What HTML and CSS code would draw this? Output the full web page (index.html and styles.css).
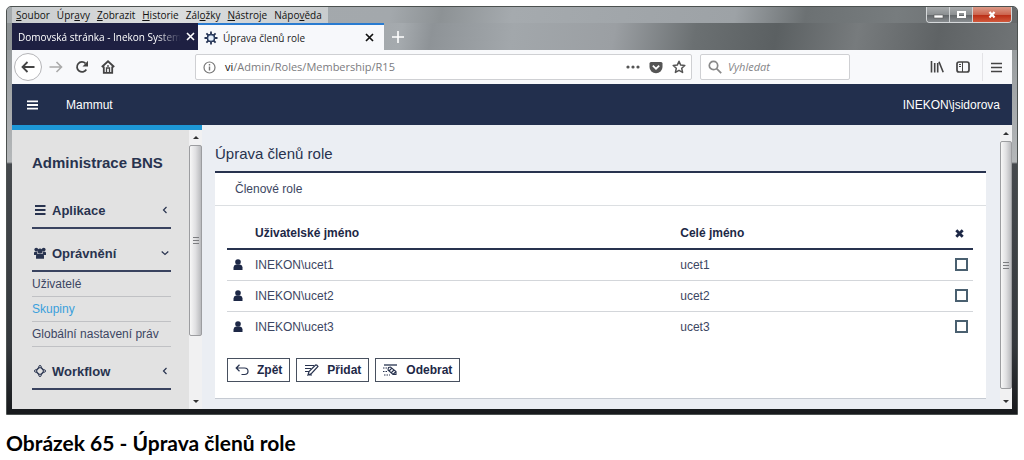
FILE: index.html
```html
<!DOCTYPE html>
<html lang="cs">
<head>
<meta charset="utf-8">
<title>Úprava členů role</title>
<link rel="stylesheet" href="styles.css">
</head>
<body>
<figure class="figure">
<div class="window">
  <div class="titlebar">
    <nav class="menubar">
      <span><u>S</u>oubor</span><span>Úpr<u>a</u>vy</span><span><u>Z</u>obrazit</span><span><u>H</u>istorie</span><span>Zál<u>o</u>žky</span><span><u>N</u>ástroje</span><span>Nápo<u>v</u>ěda</span>
    </nav>
    <div class="winctl">
      <button aria-label="Minimalizovat"><svg width="22" height="14" viewBox="0 0 22 14"><rect x="7" y="7" width="9" height="3" fill="#fff" stroke="#555" stroke-width=".6"/></svg></button>
      <button aria-label="Maximalizovat"><svg width="22" height="14" viewBox="0 0 22 14"><rect x="8" y="4" width="7" height="5" fill="none" stroke="#fff" stroke-width="2"/></svg></button>
      <button class="close" aria-label="Zavřít"><svg width="38" height="14" viewBox="0 0 38 14"><path d="M16.500 4l5 5.500M21.500 4l-5 5.500" stroke="#fff" stroke-width="2.200"/></svg></button>
    </div>
  </div>
  <div class="tabs">
    <div class="tab tab-dark">
      <span class="tab-label">Domovská stránka - Inekon System</span>
      <button aria-label="Zavřít panel"><svg width="9" height="9" viewBox="0 0 9 9"><path d="M1 1l7 7M8 1l-7 7" stroke="#fff" stroke-width="1.600"/></svg></button>
    </div>
    <div class="tab tab-active">
      <svg width="14" height="14" viewBox="0 0 14 14"><g stroke="#263454" stroke-width="1.800"><path d="M7 .5v13M.5 7h13M2.400 2.400l9.200 9.200M11.600 2.400l-9.200 9.200"/></g><circle cx="7" cy="7" r="4" fill="#4d6387" stroke="#263454"/><circle cx="7" cy="7" r="2.600" fill="#e6effa"/></svg>
      <span class="tab-label">Úprava členů role</span>
      <button aria-label="Zavřít panel"><svg width="9" height="9" viewBox="0 0 9 9"><path d="M1 1l7 7M8 1l-7 7" stroke="#111" stroke-width="1.700"/></svg></button>
    </div>
    <button class="newtab" aria-label="Nový panel"><svg width="12" height="12" viewBox="0 0 12 12"><path d="M6 0v12M0 6h12" stroke="#fff" stroke-width="1.600"/></svg></button>
  </div>
  <div class="toolbar">
    <button class="back" aria-label="Zpět"><svg width="14" height="12" viewBox="0 0 14 12"><path d="M13.500 6H1.500M6.500 1L1.500 6l5 5" fill="none" stroke="#444" stroke-width="1.800"/></svg></button>
    <button class="fwd" aria-label="Vpřed"><svg width="14" height="12" viewBox="0 0 14 12"><path d="M.5 6h12M7.500 1l5 5-5 5" fill="none" stroke="#aaa" stroke-width="1.600"/></svg></button>
    <button class="reload" aria-label="Obnovit"><svg width="14" height="14" viewBox="0 0 14 14"><path d="M11.300 9.500A5 5 0 1 1 10.500 3.300" fill="none" stroke="#444" stroke-width="1.800"/><path d="M13 .8v5.700H7.500z" fill="#444"/></svg></button>
    <button class="home" aria-label="Domů"><svg width="14" height="14" viewBox="0 0 14 14"><path d="M.8 7L7 1.300 13.200 7M2.800 6.500v6.300h8.400V6.500" fill="none" stroke="#444" stroke-width="1.800"/><path d="M5.500 12.500V8h3v4.500M7 5v2" fill="none" stroke="#444" stroke-width="1.300"/></svg></button>
    <div class="field url">
      <svg width="13" height="13" viewBox="0 0 13 13"><circle cx="6.500" cy="6.500" r="5.500" fill="none" stroke="#777" stroke-width="1.200"/><path d="M6.500 5.500v4M6.500 3v1.500" stroke="#777" stroke-width="1.400"/></svg>
      <span class="address"><b>vi</b>/Admin/Roles/Membership/R15</span>
      <svg width="14" height="4" viewBox="0 0 14 4"><g fill="#555"><circle cx="2" cy="2" r="1.600"/><circle cx="7" cy="2" r="1.600"/><circle cx="12" cy="2" r="1.600"/></g></svg>
      <svg width="14" height="13" viewBox="0 0 14 13"><path d="M2 1h10q1.500 0 1.500 1.500V6a6.500 6.200 0 0 1-13 0V2.500Q.5 1 2 1z" fill="#555"/><path d="M3.800 4.600L7 7.700l3.200-3.100" fill="none" stroke="#fff" stroke-width="1.700"/></svg>
      <svg width="14" height="14" viewBox="0 0 14 14"><path d="M7 1.300l1.700 3.800 4.100.4-3.100 2.800.9 4.100L7 10.300l-3.600 2.100.9-4.100L1.200 5.500l4.100-.4z" fill="none" stroke="#555" stroke-width="1.500" stroke-linejoin="round"/></svg>
    </div>
    <label class="field search">
      <svg width="14" height="14" viewBox="0 0 14 14"><circle cx="5.500" cy="5.500" r="4.200" fill="none" stroke="#888" stroke-width="1.700"/><path d="M8.600 8.600l4.600 4.600" stroke="#888" stroke-width="1.700"/></svg>
      <input type="text" placeholder="Vyhledat" aria-label="Vyhledat">
    </label>
    <div class="tools">
      <button aria-label="Knihovna"><svg width="14" height="12" viewBox="0 0 14 12"><path d="M1.500 0v11.500M4.700 2v9.500M7.700 2v9.500M9 .8l4.200 10.500" stroke="#444" stroke-width="1.600" fill="none"/></svg></button>
      <button aria-label="Postranní lišta"><svg width="14" height="12" viewBox="0 0 14 12"><rect x="1" y="1" width="12" height="10" rx="2" fill="none" stroke="#444" stroke-width="1.700"/><path d="M6.500 1v10M3 3.500h2M3 5.500h2" stroke="#444"/></svg></button>
      <button class="appmenu" aria-label="Nabídka"><svg width="11" height="11" viewBox="0 0 11 11"><path d="M0 1.500h11M0 5.500h11M0 9.500h11" stroke="#444" stroke-width="1.500"/></svg></button>
    </div>
  </div>
  <header class="appbar">
    <button aria-label="Menu"><svg width="11" height="10" viewBox="0 0 11 10"><path d="M0 1.300h11M0 5h11M0 8.700h11" stroke="#fff" stroke-width="1.800"/></svg></button>
    <span class="brand">Mammut</span>
    <span>INEKON\jsidorova</span>
  </header>
  <div class="page">
    <aside class="sidebar">
      <div class="side-body">
        <nav class="side-nav">
          <h2>Administrace BNS</h2>
          <button class="group"><svg width="12" height="12" viewBox="0 0 12 12"><path d="M1 2h10.500M1 6h10.500M1 10h10.500" stroke="#28334f" stroke-width="1.800"/></svg><span>Aplikace</span><svg class="chev" width="8" height="8" viewBox="0 0 8 8"><path d="M5.500 1L2.500 4l3 3" fill="none" stroke="#28334f" stroke-width="1.200"/></svg></button>
          <button class="group"><svg width="12" height="12" viewBox="0 0 12 12"><g fill="#28334f"><circle cx="2.300" cy="2.600" r="1.900"/><circle cx="9.700" cy="2.600" r="1.900"/><path d="M0 8V6q0-1.300 1.300-1.300h2V8zM12 8V6q0-1.300-1.300-1.300h-2V8z"/><circle cx="6" cy="4" r="2.500"/><path d="M2 11.700V9q0-2.200 2-2.200h4q2 0 2 2.200v2.700z"/></g></svg><span>Oprávnění</span><svg class="chev" width="8" height="8" viewBox="0 0 8 8"><path d="M.7 2.500L4 5.500l3.300-3" fill="none" stroke="#28334f" stroke-width="1.200"/></svg></button>
          <a href="#">Uživatelé</a>
          <a href="#" class="current">Skupiny</a>
          <a href="#">Globální nastavení práv</a>
          <button class="group last"><svg width="12" height="12" viewBox="0 0 12 12"><path d="M6 1.600L10.400 6 6 10.400 1.600 6z" fill="none" stroke="#28334f" stroke-width="1.400"/><g fill="#e2e2e2" stroke="#28334f" stroke-width="1"><circle cx="6" cy="1.700" r="1.200"/><circle cx="10.300" cy="6" r="1.200"/><circle cx="6" cy="10.300" r="1.200"/><circle cx="1.700" cy="6" r="1.200"/></g></svg><span>Workflow</span><svg class="chev" width="8" height="8" viewBox="0 0 8 8"><path d="M5.500 1L2.500 4l3 3" fill="none" stroke="#28334f" stroke-width="1.200"/></svg></button>
        </nav>
        <div class="scroll side-scroll"><i class="up"></i><div class="thumb"><i class="grip"></i></div><i class="down"></i></div>
      </div>
    </aside>
    <main class="content">
      <h1>Úprava členů role</h1>
      <section class="panel">
        <h3>Členové role</h3>
        <form class="panel-body">
          <table>
            <thead><tr><th class="c-icon"></th><th class="c-user">Uživatelské jméno</th><th>Celé jméno</th><th class="c-check"><svg width="9" height="9" viewBox="0 0 9 9"><path d="M1.300 1.300l6.400 6.400M7.700 1.300L1.300 7.700" stroke="#1d2846" stroke-width="2.800"/></svg></th></tr></thead>
            <tbody>
              <tr><td class="c-icon"><svg width="10" height="11" viewBox="0 0 10 11"><circle cx="5" cy="3" r="2.800" fill="#1d2846"/><path d="M.5 11V8.500Q.5 6 3 5.500h4q2.500.5 2.500 3V11z" fill="#1d2846"/></svg></td><td>INEKON\ucet1</td><td>ucet1</td><td class="c-check"><input type="checkbox" aria-label="ucet1"></td></tr>
              <tr><td class="c-icon"><svg width="10" height="11" viewBox="0 0 10 11"><circle cx="5" cy="3" r="2.800" fill="#1d2846"/><path d="M.5 11V8.500Q.5 6 3 5.500h4q2.500.5 2.500 3V11z" fill="#1d2846"/></svg></td><td>INEKON\ucet2</td><td>ucet2</td><td class="c-check"><input type="checkbox" aria-label="ucet2"></td></tr>
              <tr><td class="c-icon"><svg width="10" height="11" viewBox="0 0 10 11"><circle cx="5" cy="3" r="2.800" fill="#1d2846"/><path d="M.5 11V8.500Q.5 6 3 5.500h4q2.500.5 2.500 3V11z" fill="#1d2846"/></svg></td><td>INEKON\ucet3</td><td>ucet3</td><td class="c-check"><input type="checkbox" aria-label="ucet3"></td></tr>
            </tbody>
          </table>
          <div class="actions">
            <button type="button"><svg width="14" height="12" viewBox="0 0 14 12"><path d="M4.500 .8L1.200 4l3.300 3.200M1.200 4H9.500q3.500 0 3.500 3.200T9.500 10.500H6.500" fill="none" stroke="#28334f" stroke-width="1.200"/></svg>Zpět</button>
            <button type="button"><svg width="15" height="12" viewBox="0 0 15 12"><path d="M1 1.500h9M1 4.500h6M1 7.500h4" stroke="#28334f" stroke-width="1.200"/><path d="M4 11l1-3.500L11.500 1q1.500-.3 2.500 1.500L7.500 9.500zM4 11h4" fill="#fff" stroke="#28334f" stroke-width="1.200"/></svg>Přidat</button>
            <button type="button"><svg width="15" height="12" viewBox="0 0 15 12"><path d="M1 1h13" stroke="#28334f" stroke-width="1.300"/><path d="M0 4h4M0 7.500h4M1 11h6" stroke="#28334f" stroke-width="1.200" stroke-dasharray="1.500 1"/><path d="M5.500 3.500l2-.5 5.500 4.500v3h-3L5 6zM6 7l3-3M8 9l3-3M10 10.500l3-3" fill="none" stroke="#28334f" stroke-width="1.100"/></svg>Odebrat</button>
          </div>
        </form>
      </section>
    </main>
    <div class="scroll"><i class="up"></i><div class="thumb"><i class="grip"></i></div><i class="down"></i></div>
  </div>
</div>
<figcaption>Obrázek 65 - Úprava členů role</figcaption>
</figure>
</body>
</html>
```

FILE: styles.css
```css
* { box-sizing: border-box; }
body { margin: 0; background: #fff; font-family: "Liberation Sans", Arial, sans-serif; font-size: 12px; color: #3c4662; }
svg { display: block; flex: none; }
button { margin: 0; padding: 0; border: 0; background: none; font: inherit; color: inherit; display: flex; align-items: center; justify-content: center; flex: none; }
a { color: inherit; text-decoration: none; }
.figure { margin: 0; padding: 6px 6px 0; }

.window {
  display: flex; flex-direction: column;
  padding: 0 5px 5px;
  border: 1px solid #4c5150;
  border-radius: 5px 5px 0 0;
  background: linear-gradient(#8d9294, #b4b7b9 156px, #45494d 158px, #34383c 340px, #17191c);
  background-origin: border-box;
}
.titlebar, .tabs { margin: 0 -5px; padding: 0 5px; }
.titlebar {
  display: flex; justify-content: space-between; height: 16px;
  border-radius: 4px 4px 0 0;
  background: linear-gradient(100deg, #a5aaad 0%, #a3a8ac 38%, #8d9295 43%, #a5aaae 50%, #9da2a6 72%, #6c7173 79%, #777c7e 88%, #66696b 100%);
}
.menubar { display: flex; gap: 7px; padding: 0 6px 0 4px; font: 10px/16px "Open Sans", "Noto Sans", sans-serif; color: #111; background: linear-gradient(90deg, #c9ccce, #dcdede 50%, #c9ccce); }
.winctl { display: flex; height: 16px; border: 1px solid #d5d8da; border-top: 0; border-radius: 0 0 4px 4px; overflow: hidden; }
.winctl button { background: linear-gradient(#a8abad, #8c9092 50%, #606467 52%, #898d90); border-right: 1px solid #d0d3d4; }
.winctl .close { background: linear-gradient(#dc9a88, #cc6650 50%, #b92c14 52%, #d2593c); border: 0; }

.tabs {
  display: flex; height: 27px;
  background: linear-gradient(100deg, #8d9294 0%, #a5aaae 39%, #8e9397 42%, #a2a7ab 50%, #9b9fa3 60%, #6b7072 68%, #5b6062 76%, #777b7d 84%, #5f6365 92%, #707476 100%);
}
.tab { display: flex; align-items: center; gap: 5px; width: 186px; padding: 0 10px 0 6px; font: 10px/16px "Open Sans", "Noto Sans", sans-serif; }
.tab-label { flex: 1; white-space: nowrap; }
.tab-dark { color: #fff; background: #1e2042; }
.tab-dark .tab-label { mask-image: linear-gradient(90deg, #000 85%, transparent); }
.tab-active { color: #222; background: #f7f8fb; border-top: 2px solid #2a7bd0; }
.newtab { width: 28px; }

.toolbar { display: flex; align-items: center; height: 34px; padding: 0 10px 0 2px; background: #f8f9fb; }
.back { width: 28px; height: 28px; border: 1px solid #b5b5b8; border-radius: 50%; background: #fff; }
.fwd { margin-left: 7px; }
.reload { margin-left: 12px; }
.home { margin-left: 12px; }
.field { display: flex; align-items: center; height: 26px; border: 1px solid #cfd0d3; border-radius: 2px; background: #fff; font: 11px/16px "Open Sans", "Noto Sans", sans-serif; }
.url { flex: 1; margin-left: 80px; padding: 0 5px 0 7px; gap: 9px; min-width: 0; }
.address { flex: 1; color: #7b7b7e; white-space: nowrap; }
.address b { font-weight: 400; color: #111; }
.search { width: 150px; margin-left: 8px; padding: 0 7px; gap: 6px; }
.search input { width: 100%; min-width: 0; border: 0; padding: 0; outline: 0; background: none; font: inherit; font-style: italic; }
.search input::placeholder { color: #858587; opacity: 1; }
.tools { display: flex; align-items: center; gap: 12px; margin-left: 80px; }
.appmenu { height: 28px; padding-left: 8px; border-left: 1px solid #e3e3e6; }

.appbar { display: flex; align-items: center; height: 41px; padding: 0 12px 0 15px; background: #222f4d; color: #fff; }
.brand { flex: 1; padding-left: 28px; }

.page { display: flex; background: #ebeef3; }
.sidebar { display: flex; flex-direction: column; width: 190px; flex: none; border-top: 5px solid #1d97d6; background: #e2e2e2; }
.side-body { display: flex; flex: 1; }
.side-nav { flex: 1; padding: 24px 18px 12px 20px; }
.side-nav h2 { margin: 0 0 24px; font-size: 15px; line-height: 18px; color: #28334f; white-space: nowrap; }
.group { width: 100%; height: 33px; justify-content: flex-start; gap: 6px; padding: 0 2px 3px; border-bottom: 2px solid #39435f; font-weight: 700; font-size: 13px; color: #28334f; }
.group + .group { margin-top: 10px; }
.chev { margin-left: auto; }
.side-nav a { display: block; line-height: 24px; border-bottom: 1px solid #c0c1c4; white-space: nowrap; }
.side-nav .current { color: #3aa0dc; }
.group.last { margin-top: 10px; }

.scroll { display: flex; flex-direction: column; align-items: center; width: 12px; flex: none; background: #f1f1f2; }
.side-scroll { width: 13px; }
.thumb { flex: 1; width: 100%; display: flex; align-items: center; justify-content: center; border: 1px solid #9c9da0; border-radius: 2px; background: linear-gradient(90deg, #f7f7f7, #e0e0e2 50%, #b9babd); }
.side-scroll .thumb { flex: none; height: 191px; }
.side-scroll .down { margin-top: auto; }
.grip { width: 6px; height: 7px; background: repeating-linear-gradient(#7c7d80 0 1px, transparent 1px 3px); }
.up, .down { border: 3px solid transparent; }
.up { border-top: 0; border-bottom-color: #333; margin: 7px 0 6px; }
.side-scroll .up { margin: 6px 0; }
.down { border-bottom: 0; border-top-color: #333; margin: 11px 0 6px; }

.content { flex: 1; min-width: 0; padding: 18px 14px 10px 13px; }
.content h1 { margin: 0; padding-bottom: 6px; border-bottom: 2px solid #28334f; font-size: 15px; line-height: 22px; font-weight: 400; color: #28334f; }
.panel { background: #fff; border-bottom: 1px solid #c5cad2; }
.panel h3 { margin: 0; padding: 0 20px; font-size: 12px; line-height: 32px; font-weight: 400; border-bottom: 1px solid #dcdfe2; }
.panel-body { margin: 0; padding: 12px 13px 16px 12px; }
table { width: 100%; border-collapse: collapse; table-layout: fixed; }
th { padding: 0; height: 31px; font-size: 12px; text-align: left; color: #1d2846; border-bottom: 2px solid #28334f; }
td { padding: 0; height: 31px; border-bottom: 1px solid #d3d6da; }
tbody tr:last-child td { border-bottom: 0; }
.c-icon { width: 28px; }
.c-icon svg { margin-left: 6px; }
.c-user { width: 57%; }
.c-check { width: 24px; }
th.c-check svg { margin-left: 6px; }
.c-check input { display: block; appearance: none; width: 13px; height: 13px; margin: 0 0 0 6px; border: 2px solid #4a6070; background: #fff; }
.actions { display: flex; gap: 6px; margin-top: 16px; }
.actions button { height: 24px; padding: 0 7px; gap: 8px; border: 1px solid #47505f; background: #fff; font-size: 12px; font-weight: 700; color: #1d2846; }

figcaption { padding-top: 15px; font: 700 21px/26px Lato, sans-serif; color: #000; }
```
